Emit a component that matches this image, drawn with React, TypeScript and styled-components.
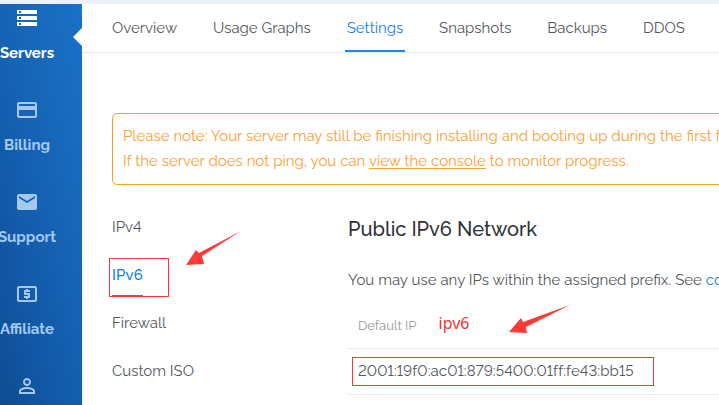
import React from "react";
import styled, { createGlobalStyle, css } from "styled-components";
import { MdStorage, MdCreditCard, MdEmail, MdLocalAtm, MdPersonOutline } from "react-icons/md";

const GlobalStyle = createGlobalStyle`
  *, *::before, *::after { box-sizing: border-box; }
  body {
    margin: 0;
    overflow: hidden;
    background: #fff;
    color: #55585c;
    font: 400 15px/25px Raleway, Lato, sans-serif;
    font-variant-numeric: lining-nums;
  }
`;

const Page = styled.div`
  position: relative;
  width: 719px;
  height: 405px;
  overflow: hidden;
  display: flex;
  flex-direction: column;
`;

const TopStrip = styled.div`
  flex: 0 0 4px;
  background: #ecf1fa;
`;

const Body = styled.div`
  flex: 1;
  min-height: 0;
  display: flex;
`;

const Sidebar = styled.nav`
  position: relative;
  flex: 0 0 82px;
  overflow: hidden;
  padding-top: 2px;
  background: linear-gradient(75deg, #0f4c92 0%, #135aaa 32%, #1768bb 70%, #1a72c9 100%);
`;

const Notch = styled.span`
  position: absolute;
  right: 0;
  top: 24px;
  border: solid transparent;
  border-width: 9px 9px 9px 0;
  border-right-color: #fff;
`;

const SideItem = styled.a<{ $active?: boolean }>`
  display: flex;
  flex-direction: column;
  align-items: center;
  gap: 13px;
  width: 110px;
  height: 92px;
  margin-left: -28px;
  color: ${(p) => (p.$active ? "#fff" : "#a3c9f1")};

  svg { flex: none; width: 24px; height: 24px; }
`;

const SideLabel = styled.span`
  font-weight: 700;
  line-height: 20px;
`;

const Main = styled.main`
  flex: 1;
  min-width: 0;
  overflow: hidden;
`;

const Tabs = styled.div`
  display: flex;
  gap: 31.9px;
  height: 49px;
  padding-left: 28px;
  border-bottom: 1px solid #e6ebf2;
`;

const Tab = styled.a<{ $active?: boolean }>`
  flex: none;
  height: 48px;
  padding: 0 2px;
  line-height: 48px;
  white-space: nowrap;
  ${(p) => p.$active && css`
    color: #1a7fe0;
    border-bottom: 2px solid #1f86e5;
  `}
`;

const Notice = styled.div`
  width: 720px;
  height: 72px;
  margin: 60px 0 0 30px;
  padding: 10px 10px;
  border: 1px solid #f9a11f;
  border-radius: 5px;
  color: #f9a035;
  white-space: nowrap;
  word-spacing: 0.11px;
`;

const ConsoleLink = styled.a`
  text-decoration: underline;
  text-decoration-thickness: 1px;
  text-underline-offset: 2px;
`;

const Columns = styled.div`
  display: flex;
  padding: 18px 0 0 30px;
`;

const SubNav = styled.div`
  flex: 0 0 236px;
  display: flex;
  flex-direction: column;
  align-items: flex-start;
`;

const SubNavItem = styled.a<{ $active?: boolean }>`
  height: 48px;
  line-height: 48px;
  ${(p) => p.$active && css`
    height: 46px;
    margin-bottom: 2px;
    color: #0b7de0;
    font-weight: 500;
    letter-spacing: 0.15px;
    box-shadow: inset 0 -2px #1f86e5;
  `}
`;

const Network = styled.section`
  flex: 0 0 420px;
  white-space: nowrap;
`;

const Heading = styled.h2`
  margin: 11px 0 0;
  color: #2c3136;
  font-size: 20px;
  font-weight: 550;
  line-height: 30px;
`;

const Intro = styled.p`
  margin: 24px 0 0;
  word-spacing: 0.1px;
`;

const IntroLink = styled.a`
  color: #1a7fe0;
`;

const TableHead = styled.div`
  height: 56px;
  padding: 20px 0 0 10px;
  border-bottom: 1px solid #ebebeb;
  color: #999;
  font-size: 13px;
`;

const AddressRow = styled.div`
  height: 46px;
  padding: 10px 0 0 10px;
  border-bottom: 1px solid #ebebeb;
  letter-spacing: 0.1px;
`;

const Highlight = styled.div<{ $x: number; $y: number; $w: number; $h: number }>`
  position: absolute;
  left: ${(p) => p.$x}px;
  top: ${(p) => p.$y}px;
  width: ${(p) => p.$w}px;
  height: ${(p) => p.$h}px;
  border: 1px solid #f93b38;
`;

const Remark = styled.span`
  position: absolute;
  left: 438.5px;
  top: 311px;
  color: #f92f2b;
  font: 400 16px/24px "Noto Sans", sans-serif;
`;

const Arrow = styled.svg<{ $x: number; $y: number }>`
  position: absolute;
  left: ${(p) => p.$x}px;
  top: ${(p) => p.$y}px;
  fill: #fd3a38;
`;

const sideItems = [
  { label: "Servers", icon: MdStorage, active: true },
  { label: "Billing", icon: MdCreditCard },
  { label: "Support", icon: MdEmail },
  { label: "Affiliate", icon: MdLocalAtm },
  { label: "", icon: MdPersonOutline },
];

const tabs = ["Overview", "Usage Graphs", "Settings", "Snapshots", "Backups", "DDOS"];
const subNav = ["IPv4", "IPv6", "Firewall", "Custom ISO"];

export default function App() {
  return (
    <Page>
      <GlobalStyle />
      <TopStrip />
      <Body>
        <Sidebar>
          {sideItems.map(({ label, icon: Icon, active }) => (
            <SideItem key={label} $active={active}>
              <Icon />
              <SideLabel>{label}</SideLabel>
            </SideItem>
          ))}
          <Notch />
        </Sidebar>
        <Main>
          <Tabs>
            {tabs.map((t) => (
              <Tab key={t} $active={t === "Settings"}>{t}</Tab>
            ))}
          </Tabs>
          <Notice>
            <div>
              Please note: Your server may still be finishing installing and booting up during the first few minutes.
            </div>
            <div>
              If the server does not ping, you can <ConsoleLink>view the console</ConsoleLink> to monitor progress.
            </div>
          </Notice>
          <Columns>
            <SubNav>
              {subNav.map((s) => (
                <SubNavItem key={s} $active={s === "IPv6"}>{s}</SubNavItem>
              ))}
            </SubNav>
            <Network>
              <Heading>Public IPv6 Network</Heading>
              <Intro>
                You may use any IPs within the assigned prefix. See <IntroLink>configuration</IntroLink>
              </Intro>
              <TableHead>Default IP</TableHead>
              <AddressRow>2001:19f0:ac01:879:5400:01ff:fe43:bb15</AddressRow>
            </Network>
          </Columns>
        </Main>
      </Body>
      <Highlight $x={109} $y={258} $w={60} $h={39} />
      <Highlight $x={352} $y={357} $w={302} $h={29} />
      <Remark>ipv6</Remark>
      <Arrow $x={186} $y={231} width="55" height="35" viewBox="0 0 55 35">
        <path d="M55 0 L16 25 L18 33 L0 34 L10 19 L13 22 Z" />
      </Arrow>
      <Arrow $x={509} $y={305} width="61" height="28" viewBox="0 0 61 28">
        <path d="M61 0 L17 22 L18 28 L0 27 L12 13 L14 17 Z" />
      </Arrow>
    </Page>
  );
}
